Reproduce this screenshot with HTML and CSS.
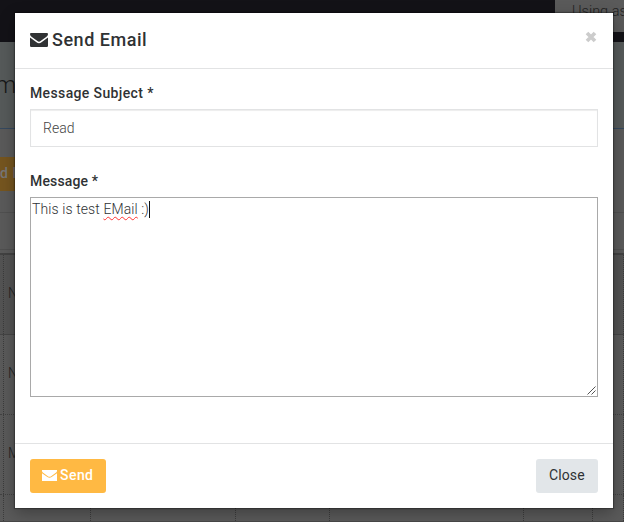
FILE: index.html
```html
<!DOCTYPE html>
<html lang="en">
<head>
<meta charset="utf-8">
<title>Send Email</title>
<link rel="stylesheet" href="styles.css">
</head>
<body>
<div class="page">
  <header class="topbar"><div class="account">Using as</div></header>
  <div class="subheader">m</div>
  <main class="content">
    <div class="toolbar"><span class="add">d I</span></div>
    <div class="filter"></div>
    <div class="table">
      <div class="row shaded"><i></i><b>N</b><i></i><i></i><i></i><i></i><i></i></div>
      <div class="row"><i></i><b>N</b><i></i><i></i><i></i><i></i><i></i></div>
      <div class="row"><i></i><b>M</b><i></i><i></i><i></i><i></i><i></i></div>
      <div class="row last"><i></i><b></b><i></i><i></i><i></i><i></i><i></i></div>
    </div>
  </main>
</div>
<section class="modal" role="dialog">
  <div class="modal-header">
    <svg class="mail" viewBox="0 0 18 14"><path d="M0 1Q0 0 1 0h16Q18 0 18 1.2 18 2.6 16.5 3.8L10.6 8.1Q9 9.2 7.4 8.1L1.5 3.8Q0 2.6 0 1ZM0 4.4l6.5 4.9q2.5 1.8 5 0L18 4.4v8.4q0 1.2-1.2 1.2H1.2Q0 14 0 12.8Z"/></svg>
    <h1><span>Send Email</span></h1>
    <svg class="close-x" viewBox="0 0 12 12"><path d="M2 2l8 8M10 2L2 10"/></svg>
  </div>
  <div class="modal-body">
    <label class="label-subject">Message Subject *</label>
    <div class="input"><span>Read</span></div>
    <label class="label-message">Message *</label>
    <div class="textarea"><span class="message">This is test <u>EMail</u> :)</span><span class="caret"></span>
      <svg class="grip" viewBox="0 0 9 9"><path d="M.5 8.5l8-8M4.5 8.5l4-4"/></svg>
    </div>
  </div>
  <div class="modal-footer">
    <div class="btn send"><svg class="mail" viewBox="0 0 15 11" preserveAspectRatio="none"><path d="M0 0h15v1.3Q14.700 2.300 13.500 3.100L8.800 6.400Q7.500 7.200 6.200 6.400L1.500 3.100Q.3 2.300 0 1.300ZM0 3.200l5.400 3.900q2.100 1.400 4.200 0L15 3.200V11H0Z"/></svg><span>Send</span></div>
    <div class="btn close"><span>Close</span></div>
  </div>
</section>
</body>
</html>
```
FILE: styles.css
```css
* { box-sizing: border-box; }
body { margin: 0; width: 624px; height: 522px; overflow: hidden; font: 14px/20px Roboto, sans-serif; color: #2f3234; background: #595959; }
.page { height: 522px; overflow: hidden; font-weight: 300; color: #222; }
.topbar { height: 42px; background: #131217; display: flex; justify-content: flex-end; }
.account { width: 69px; height: 32px; background: #5a5a5a; padding: 2px 0 0 17px; white-space: nowrap; font-size: 14.5px; }
.subheader { height: 87px; background: #565a5a; border-bottom: 1px solid #35495f; font-size: 24px; line-height: 86px; text-indent: -5px; color: #171717; }
.content { background: #5a5a5a; }
.toolbar { height: 84px; padding-top: 28px; border-bottom: 1px solid #505050; }
.add { display: block; width: 40px; height: 34px; background: #75551f; color: #777; font-weight: 500; line-height: 33px; letter-spacing: .6px; white-space: nowrap; }
.filter { height: 42px; border-bottom: 2px solid #424242; background: linear-gradient(#505050, #505050) 0 36px / 100% 1px no-repeat; }
.row { display: grid; grid-template-columns: 4px 87px 145px 94px 194px 69px 1fr; height: 80px; border-bottom: 1px dotted #424242; overflow: hidden; }
.row.shaded { background: #535353; border-bottom: 1px solid #454545; }
.row.last { height: 27px; border-bottom: 1px solid #484848; }
.row i, .row b { border-right: 1px dotted #3c3c3c; font-weight: 300; line-height: 76px; padding-left: 4px; min-width: 0; }
.row i { padding: 0; }
.modal { position: absolute; left: 15px; top: 13px; width: 598px; height: 495px; background: #fff; box-shadow: 0 0 1px 1px rgba(0,0,0,.28), 0 5px 15px rgba(0,0,0,.3); }
.modal-header { height: 56px; border-bottom: 1px solid #e2e3e4; display: flex; padding: 0 16px 0 15px; }
.modal-header .mail { width: 18px; height: 14px; margin-top: 20px; fill: #303234; }
h1 { margin: 16px 0 0 4px; font-size: 18px; line-height: 22px; font-weight: 500; letter-spacing: .53px; }
.close-x { width: 12px; height: 12px; margin: 18px 0 0 auto; stroke: #ccc; stroke-width: 3.7; fill: none; }
.modal-body { height: 374px; padding: 14px 15px 0; }
label { display: block; font-weight: 500; height: 20px; }
.label-subject { letter-spacing: .37px; }
.label-message { letter-spacing: .15px; margin-top: 24px; }
.input { margin-top: 6px; height: 38px; border: 1px solid #e2e3e4; box-shadow: inset 0 1px 1px rgba(0,0,0,.075); padding: 8px 12px; font-weight: 300; color: #444; }
.textarea { position: relative; margin-top: 6px; height: 200px; border: 1px solid #a9a9a9; padding: 1px; font-weight: 300; display: flex; align-items: flex-start; }
.message { white-space: pre; letter-spacing: .1px; }
u { text-decoration: underline wavy #f33 1px; text-underline-offset: 2px; text-decoration-skip-ink: none; }
.caret { width: 1px; height: 17px; background: #111; margin-top: 2px; }
.grip { position: absolute; right: 1px; bottom: 1px; width: 9px; height: 9px; stroke: #555; fill: none; stroke-width: 1; }
.modal-footer { height: 65px; border-top: 1px solid #e2e3e4; padding: 15px; display: flex; justify-content: space-between; }
.btn { height: 34px; border-radius: 3px; display: flex; padding: 6px 12px; }
.send { width: 76px; background: #ffb943; color: #fff; font-weight: 500; letter-spacing: .45px; }
.send .mail { width: 15px; height: 11px; margin: 5px 3px 0 0; fill: #fff; flex: none; }
.close { width: 62px; padding-left: 13px; background: #e2e6e9; font-weight: 400; letter-spacing: .1px; }
```
